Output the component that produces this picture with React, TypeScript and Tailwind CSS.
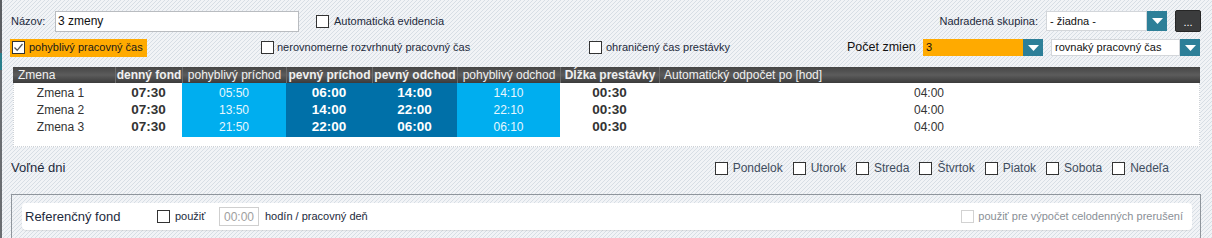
import React from "react";

const rows = [
  { name: "Zmena 1", fond: "07:30", pPrichod: "05:50", prichod: "06:00", odchod: "14:00", pOdchod: "14:10", prestavka: "00:30", odpocet: "04:00" },
  { name: "Zmena 2", fond: "07:30", pPrichod: "13:50", prichod: "14:00", odchod: "22:00", pOdchod: "22:10", prestavka: "00:30", odpocet: "04:00" },
  { name: "Zmena 3", fond: "07:30", pPrichod: "21:50", prichod: "22:00", odchod: "06:00", pOdchod: "06:10", prestavka: "00:30", odpocet: "04:00" },
];

const days = ["Pondelok", "Utorok", "Streda", "Štvrtok", "Piatok", "Sobota", "Nedeľa"];

function Check({ checked = false, disabled = false }: { checked?: boolean; disabled?: boolean }) {
  return (
    <span
      className={`w-[13px] h-[13px] shrink-0 bg-white border flex items-center justify-center ${
        disabled ? "border-[#d2d2d2]" : "border-[#333333]"
      }`}
    >
      {checked && (
        <svg width="11" height="11" viewBox="0 0 11 11">
          <path d="M1.5 5.5 L4.2 8.3 L9.5 2" fill="none" stroke="#555" strokeWidth="1.3" />
        </svg>
      )}
    </span>
  );
}

function Arrow({ h }: { h: string }) {
  return (
    <div className={`w-[20px] ${h} bg-[#2d7f98] flex items-center justify-center shrink-0`}>
      <svg width="11" height="6" viewBox="0 0 11 6">
        <path d="M0 0 H11 L5.5 6 Z" fill="#fff" />
      </svg>
    </div>
  );
}

export default function App() {
  return (
    <div className="w-[1212px] h-[238px] overflow-hidden flex font-['Liberation_Sans',Arial,sans-serif] bg-[#eef1f4] bg-[linear-gradient(135deg,#d7dee5_20%,#f1f3f6_20%,#f1f3f6_50%,#d7dee5_50%,#d7dee5_70%,#f1f3f6_70%)] bg-[length:4px_4px]">
      {/* left edge */}
      <div className="w-[2px] flex flex-col shrink-0">
        <div className="h-[53px] bg-[#5c5f63]" />
        <div className="h-[17px] bg-[#2a7f8c]" />
        <div className="flex-1 bg-[#6a6d71]" />
      </div>

      <div className="flex-1 flex flex-col pl-[8px] pr-[11px]">
        {/* row 1 */}
        <div className="mt-[10px] h-[22px] flex items-center text-[11px] text-[#1d2a3c]">
          <div className="w-[45px] pl-[1px]">Názov:</div>
          <div className="w-[244px] h-[21px] bg-white border border-[#b9bcc0] flex items-center pl-[2px] text-[12px] text-[#111]">
            3 zmeny
          </div>
          <div className="ml-[17px]">
            <Check />
          </div>
          <div className="ml-[5px]">Automatická evidencia</div>
          <div className="flex-1" />
          <div className="mr-[8px]">Nadradená skupina:</div>
          <div className="w-[101px] h-[20px] bg-white border border-[#d3d6da] flex items-center pl-[3px] text-[#111]">
            - žiadna -
          </div>
          <div className="w-[19px] flex">
            <Arrow h="h-[20px]" />
          </div>
          <div className="ml-[9px] w-[26px] h-[22px] bg-[#3b3c3d] border border-[#262626] rounded-[2px] flex items-end justify-center pb-[3px] text-white text-[11px] leading-none">
            ...
          </div>
        </div>

        {/* row 2 */}
        <div className="mt-[6px] h-[19px] flex items-center text-[11px] text-[#1d2a3c]">
          <div className="w-[251px] flex">
            <div className="w-[137px] h-[18px] bg-[#ffaa00] flex items-center pl-[2px]">
              <Check checked />
              <span className="ml-[4px] text-[#1a1a1a]">pohyblivý pracovný čas</span>
            </div>
          </div>
          <div className="w-[328px] flex items-center">
            <Check />
            <span className="ml-[3px]">nerovnomerne rozvrhnutý pracovný čas</span>
          </div>
          <div className="w-[258px] flex items-center">
            <Check />
            <span className="ml-[4px]">ohraničený čas prestávky</span>
          </div>
          <div className="w-[76px] text-[12.5px] text-[#111]">Počet zmien</div>
          <div className="w-[100px] h-[17px] bg-[#ffaa00] flex items-center pl-[3px] text-[#111]">3</div>
          <Arrow h="h-[17px]" />
          <div className="ml-[8px] w-[129px] h-[17px] bg-white border border-[#d3d6da] flex items-center pl-[3px] text-[#111]">
            rovnaký pracovný čas
          </div>
          <Arrow h="h-[17px]" />
        </div>

        {/* table */}
        <div className="mt-[10px] ml-[3px] mr-[1px] flex flex-col">
          <div className="grid grid-cols-[102px_67px_104px_86px_85px_103px_99px_1fr] h-[16px] bg-linear-to-b from-[#464646] via-[#5c5c5c] to-[#3b3b3b] text-[12px] text-[#f0f0f0] leading-[16px] whitespace-nowrap">
            <div className="pl-[5px]">Zmena</div>
            <div className="text-center font-bold border-l border-[#6c6c6c]">denný fond</div>
            <div className="text-center border-l border-[#6c6c6c]">pohyblivý príchod</div>
            <div className="text-center font-bold border-l border-[#6c6c6c]">pevný príchod</div>
            <div className="text-center font-bold border-l border-[#6c6c6c]">pevný odchod</div>
            <div className="text-center border-l border-[#6c6c6c]">pohyblivý odchod</div>
            <div className="text-center font-bold border-l border-[#6c6c6c]">Dĺžka prestávky</div>
            <div className="pl-[4px] border-l border-[#6c6c6c]">Automatický odpočet po [hod]</div>
          </div>
          <div className="bg-white border-x border-b border-dotted border-[#cfd3d8] pb-[13px]">
            {rows.map((r, i) => (
              <div
                key={r.name}
                className={`grid grid-cols-[101px_67px_104px_86px_85px_103px_99px_1fr] items-stretch text-[#333] ${
                  i === 2 ? "h-[16px]" : "h-[17px]"
                }`}
              >
                <div className="flex items-center justify-center pr-[8px] text-[12px]">{r.name}</div>
                <div className="flex items-center justify-center font-bold text-[13.5px]">{r.fond}</div>
                <div className="flex items-center justify-center bg-[#00aeef] text-[#e6f7fe] text-[12px]">{r.pPrichod}</div>
                <div className="flex items-center justify-center bg-[#0070a8] text-white font-bold text-[13.5px]">{r.prichod}</div>
                <div className="flex items-center justify-center bg-[#0070a8] text-white font-bold text-[13.5px]">{r.odchod}</div>
                <div className="flex items-center justify-center bg-[#00aeef] text-[#e6f7fe] text-[12px]">{r.pOdchod}</div>
                <div className="flex items-center justify-center font-bold text-[13.5px]">{r.prestavka}</div>
                <div className="flex items-center justify-center text-[12px]">{r.odpocet}</div>
              </div>
            ))}
          </div>
        </div>

        {/* free days */}
        <div className="h-[42px] flex items-center pl-[1px] pr-[32px]">
          <div className="text-[13px] text-[#1d2a3c]">Voľné dni</div>
          <div className="flex-1" />
          <div className="flex items-center gap-[10px] text-[12px] text-[#3f4d5e]">
            {days.map((d) => (
              <div key={d} className="flex items-center gap-[5px]">
                <Check />
                <span>{d}</span>
              </div>
            ))}
          </div>
        </div>

        {/* reference fund */}
        <div className="mt-[5px] ml-[1px] flex-1 border-t border-x border-[#8f959c] pt-[8px] pl-[10px] pr-[8px]">
          <div className="h-[27px] bg-white rounded-[4px] shadow-[0_1px_1px_rgba(0,0,0,0.08)] flex items-center pl-[3px] pr-[9px] text-[11px] text-[#1d2a3c]">
            <div className="w-[132px] text-[13px]">Referenčný fond</div>
            <Check />
            <div className="w-[49px] pl-[5px]">použiť</div>
            <div className="w-[40px] h-[19px] border border-[#cfcfcf] flex items-center justify-center text-[12px] text-[#a0a0a0]">
              00:00
            </div>
            <div className="ml-[6px]">hodín / pracovný deň</div>
            <div className="flex-1" />
            <Check disabled />
            <div className="ml-[4px] text-[#8a8f96]">použiť pre výpočet celodenných prerušení</div>
          </div>
        </div>
      </div>
    </div>
  );
}
